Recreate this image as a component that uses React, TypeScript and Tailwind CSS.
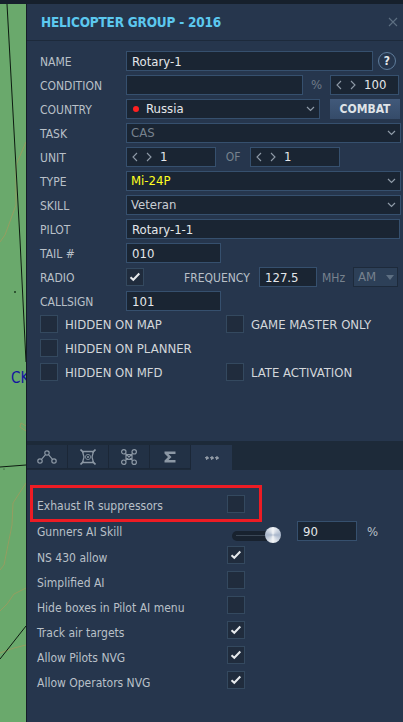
import React from "react";

const Chevron = ({ className }: { className?: string }) => (
  <svg width="9" height="6" viewBox="0 0 9 6" className={className ?? ""} fill="none" stroke="#8f9ba8" strokeWidth="1.2">
    <path d="M1 1l3.5 3.5L8 1" />
  </svg>
);

const Check = () => (
  <svg width="12" height="10" viewBox="0 0 12 10" fill="none" stroke="#e6e9ec" strokeWidth="2">
    <path d="M1.5 5.2l2.8 2.6 6-6.3" />
  </svg>
);

const CheckBox = ({ checked }: { checked?: boolean }) => (
  <div className="w-[18px] h-[18px] shrink-0 bg-[#202c3d] border border-[#34495f] flex items-center justify-center">
    {checked && <Check />}
  </div>
);

const Field = ({ text, className, dim }: { text?: string; className?: string; dim?: boolean }) => (
  <div
    className={`h-[20px] bg-[#1a2533] border border-[#36506e] pl-[5px] leading-[19px] text-[13px] ${dim ? "text-[#7f8a96]" : "text-[#e4e7ea]"} ${className ?? ""}`}
  >
    {text}
  </div>
);

const Select = ({ children, className }: { children: React.ReactNode; className?: string }) => (
  <div className={`h-[20px] bg-[#1a2533] border border-[#36506e] pl-[4px] pr-[4px] flex items-center justify-between text-[13px] ${className ?? ""}`}>
    {children}
    <Chevron />
  </div>
);

const Spinner = ({ value, className }: { value: string; className?: string }) => (
  <div className={`h-[20px] bg-[#1a2533] border border-[#36506e] flex items-center text-[13px] text-[#e4e7ea] pl-[5px] ${className ?? ""}`}>
    <svg width="21" height="10" viewBox="0 0 21 10" fill="none" stroke="#8f9ba8" strokeWidth="1.1" className="shrink-0">
      <path d="M5 1L1 5l4 4M15 1l4 4-4 4" />
    </svg>
    <span className="ml-[7px]">{value}</span>
  </div>
);

const Row = ({ label, children }: { label: string; children: React.ReactNode }) => (
  <div className="h-[20px] mb-[4px] flex items-center">
    <div className="w-[86px] shrink-0 pt-[1px] text-[#b9c0c8]">{label}</div>
    {children}
  </div>
);

const FlagRow = ({ left, right }: { left: string; right?: string }) => (
  <div className="h-[18px] mb-[6px] flex items-center text-[13px]">
    <CheckBox />
    <div className="w-[168px] pl-[7px] pt-[1px] text-[#d3d7db]">{left}</div>
    {right && <CheckBox />}
    {right && <div className="pl-[7px] pt-[1px] text-[#d3d7db]">{right}</div>}
  </div>
);

const OptionRow = ({ label, checked }: { label: string; checked?: boolean }) => (
  <div className="h-[25px] flex items-start">
    <div className="w-[190px] leading-[24px] text-[#b9c0c8]">{label}</div>
    <CheckBox checked={checked} />
  </div>
);

const Tab = ({ children, active }: { children: React.ReactNode; active?: boolean }) => (
  <div
    className={`w-[41px] flex items-center justify-center ${active ? "h-[25px] bg-[#26364d]" : "h-[24px] bg-[#223145] border-r border-b border-[#1b2737]"}`}
  >
    {children}
  </div>
);

const MapStrip = () => (
  <svg width="26" height="718" viewBox="0 4 26 718" className="shrink-0 block bg-[#6aa96c]">
    <g fill="none" stroke="#a39a5e" strokeWidth="1" opacity="0.75">
      <path d="M26 142l-10 23 0 40-11 30-5 7" />
      <path d="M26 426l-5-3-1 4 6 4" />
      <path d="M26 483l-13 20-1 22-8 40-4 5" />
      <path d="M26 588l-12 6-7 10-7 7" />
      <path d="M26 645l-12 3-14 5" />
    </g>
    <g fill="none" stroke="#0c1a10" strokeWidth="1">
      <path d="M7 4l13 236 6 122" />
      <path d="M0 467l26-2" />
      <path d="M26 626L0 659" />
    </g>
    <circle cx="15" cy="292" r="1" fill="#1d3a20" />
    <circle cx="4" cy="469" r="0.6" fill="#1d3a20" />
    <text x="11" y="383" fontSize="15" fill="#1313a0" fontFamily="'DejaVu Sans', sans-serif">CK</text>
  </svg>
);

const iconStroke = "#8c98a5";

export default function App() {
  return (
    <div className="w-[403px] h-[722px] overflow-hidden bg-[#26364d] font-['DejaVu_Sans',sans-serif] font-stretch-condensed text-[12px]">
      <div className="h-[4px] bg-[#16202c]" />
      <div className="flex h-[718px]">
        <MapStrip />
        <div className="flex-1 border-l border-[#141d28] bg-[#26364d] min-w-0 flex flex-col">
          {/* title */}
          <div className="h-[37px] shrink-0 flex items-center justify-between pl-[14px] pr-[5px] border-b border-[#1d2a3b]">
            <div className="pt-[1px] font-bold text-[13.5px] tracking-[-0.2px] text-[#5cc8ef]">HELICOPTER GROUP - 2016</div>
            <svg width="10" height="10" viewBox="0 0 10 10" stroke="#5d6f82" strokeWidth="1.1">
              <path d="M1 1l8 8M9 1L1 9" />
            </svg>
          </div>

          <div className="pl-[13px] pt-[10px] h-[400px] shrink-0">
            <Row label="NAME">
              <Field text="Rotary-1" className="w-[247px]" />
              <div className="ml-[5px] w-[18px] h-[18px] rounded-full border-[1.5px] border-[#5f7d9c] flex items-center justify-center font-bold text-[12px] text-[#e4e7ea]">?</div>
            </Row>
            <Row label="CONDITION">
              <Field className="w-[177px]" />
              <div className="w-[27px] text-center text-[#6f7b88] text-[13px]">%</div>
              <Spinner value="100" className="w-[69px]" />
            </Row>
            <Row label="COUNTRY">
              <Select className="w-[194px]">
                <div className="flex items-center text-[#e4e7ea] pl-[2px]">
                  <div className="w-[6px] h-[6px] rounded-full bg-[#ff2020]" />
                  <span className="ml-[7px]">Russia</span>
                </div>
              </Select>
              <div className="ml-[10px] w-[70px] h-[20px] bg-gradient-to-b from-[#41597a] to-[#354b69] flex items-center justify-center font-bold text-[#dfe3e7]">COMBAT</div>
            </Row>
            <Row label="TASK">
              <Select className="w-[275px] text-[#77828e]">CAS</Select>
            </Row>
            <Row label="UNIT">
              <Spinner value="1" className="w-[90px]" />
              <div className="w-[34px] text-center text-[#77828e]">OF</div>
              <Spinner value="1" className="w-[90px]" />
            </Row>
            <Row label="TYPE">
              <Select className="w-[275px] text-[#ffff20]">Mi-24P</Select>
            </Row>
            <Row label="SKILL">
              <Select className="w-[275px] text-[#c9ced3]">Veteran</Select>
            </Row>
            <Row label="PILOT">
              <Field text="Rotary-1-1" className="w-[274px]" />
            </Row>
            <Row label="TAIL #">
              <Field text="010" className="w-[95px]" />
            </Row>
            <Row label="RADIO">
              <CheckBox checked />
              <div className="ml-[40px] w-[75px] pt-[1px] text-[#b9c0c8]">FREQUENCY</div>
              <Field text="127.5" className="w-[58px]" />
              <div className="w-[36px] pl-[5px] pt-[1px] text-[#77828e]">MHz</div>
              <div className="w-[45px] h-[20px] bg-[#2d4058] border border-[#1d2a3b] flex items-center justify-between pl-[4px] pr-[3px] text-[13px] text-[#77828e]">
                AM
                <svg width="8" height="5" viewBox="0 0 8 5" fill="#5d6f82"><path d="M0 0h8L4 5z" /></svg>
              </div>
            </Row>
            <Row label="CALLSIGN">
              <Field text="101" className="w-[95px]" />
            </Row>
            <FlagRow left="HIDDEN ON MAP" right="GAME MASTER ONLY" />
            <FlagRow left="HIDDEN ON PLANNER" />
            <FlagRow left="HIDDEN ON MFD" right="LATE ACTIVATION" />
          </div>

          {/* tab strip */}
          <div className="h-[29px] shrink-0 bg-[#1d2a39] pt-[4px] flex items-start">
            <Tab>
              <svg width="20" height="14" viewBox="0 0 20 14" fill="none" stroke={iconStroke} strokeWidth="1.2">
                <circle cx="3" cy="11" r="2.2" /><circle cx="10" cy="3" r="2.2" /><circle cx="17" cy="11" r="2.2" />
                <path d="M4.5 9.3L8.5 4.6M11.5 4.6l4 4.7" />
              </svg>
            </Tab>
            <Tab>
              <svg width="16" height="16" viewBox="0 0 16 16" fill="none" stroke={iconStroke} strokeWidth="1.6">
                <path d="M2.5 2.5h11l-1.5 5.5 1.5 5.5h-11L4 8z" strokeWidth="1.3" />
                <path d="M0.5 0.5l3 3M15.5 0.5l-3 3M0.5 15.5l3-3M15.5 15.5l-3-3" />
                <circle cx="8" cy="8" r="2.6" strokeWidth="0.8" />
                <circle cx="8" cy="8" r="1" fill={iconStroke} stroke="none" />
              </svg>
            </Tab>
            <Tab>
              <svg width="16" height="16" viewBox="0 0 16 16" fill="none" stroke={iconStroke} strokeWidth="1.2">
                <circle cx="2.8" cy="2.8" r="2.2" /><circle cx="13.2" cy="2.8" r="2.2" /><circle cx="2.8" cy="13.2" r="2.2" /><circle cx="13.2" cy="13.2" r="2.2" />
                <path d="M4.5 4.5l7 7M11.5 4.5l-7 7M5 5.5h6v5H5z" />
              </svg>
            </Tab>
            <Tab>
              <svg width="12" height="12" viewBox="0 0 12 12" fill={iconStroke}>
                <path d="M0.5 0.5H11.5V3H4.5L7.5 6 4.5 9H11.5V11.5H0.5V9.5L4 6 0.5 2.5z" />
              </svg>
            </Tab>
            <Tab active>
              <svg width="14" height="4" viewBox="0 0 14 4" fill="none" stroke="#eef0f2" strokeWidth="0.9">
                <path d="M2 0.6L3.4 2 2 3.4 0.6 2zM7 0.6L8.4 2 7 3.4 5.6 2zM12 0.6L13.4 2 12 3.4 10.6 2z" />
              </svg>
            </Tab>
          </div>

          {/* options */}
          <div className="pl-[3px] pt-[15px]">
            <div className="w-[232px] h-[37px] border-[3px] border-[#ed1c24] pl-[4px] flex items-start pt-[7px]">
              <div className="w-[190px] leading-[22px] text-[#b9c0c8]">Exhaust IR suppressors</div>
              <CheckBox />
            </div>
            <div className="pl-[7px]">
              <div className="h-[24px] flex items-start">
                <div className="w-[195px] leading-[20px] text-[#b9c0c8]">Gunners AI Skill</div>
                <div className="relative w-[49px] h-[10px] mt-[9px] rounded-full bg-[#18222f]">
                  <div className="absolute left-[4px] right-[8px] top-[4px] h-[1px] bg-[#3a4756]" />
                  <div className="absolute left-[33px] top-[-4px] w-[16px] h-[16px] rounded-full bg-[conic-gradient(#f4f6f8,#a7b5ca,#f4f6f8,#a7b5ca,#f4f6f8)]" />
                </div>
                <Field text="90" className="w-[60px] ml-[16px] -mt-[1px]" />
                <div className="ml-[10px] text-[13px] leading-[20px] text-[#b9c0c8]">%</div>
              </div>
              <OptionRow label="NS 430 allow" checked />
              <OptionRow label="Simplified AI" />
              <OptionRow label="Hide boxes in Pilot AI menu" />
              <OptionRow label="Track air targets" checked />
              <OptionRow label="Allow Pilots NVG" checked />
              <OptionRow label="Allow Operators NVG" checked />
            </div>
          </div>
        </div>
      </div>
    </div>
  );
}
